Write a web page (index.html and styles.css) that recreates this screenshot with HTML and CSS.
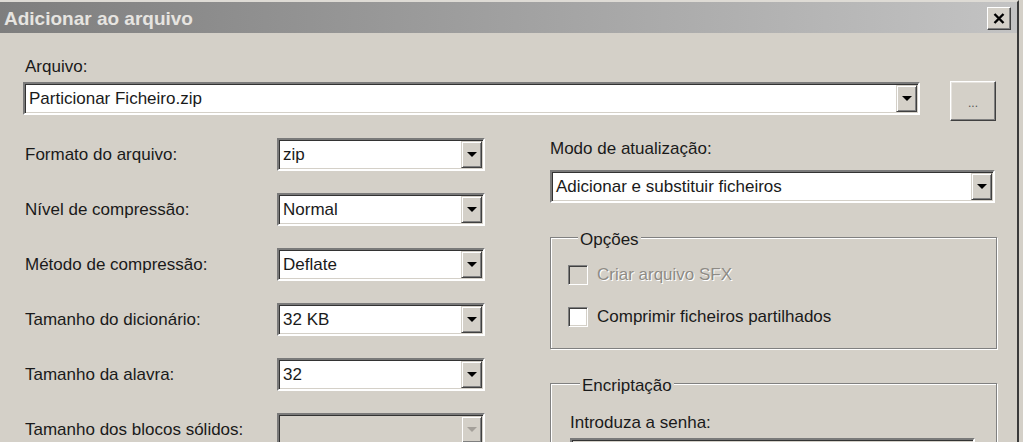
FILE: index.html
```html
<!DOCTYPE html>
<html lang="pt">
<head>
<meta charset="utf-8">
<title>Adicionar ao arquivo</title>
<link rel="stylesheet" href="styles.css">
</head>
<body>
<div class="window">
  <div class="titlebar">
    <span class="title">Adicionar ao arquivo</span>
    <span class="close">
      <svg width="12" height="11" viewBox="0 0 12 11"><path d="M1.5 1 L10.5 10 M10.5 1 L1.5 10" stroke="#000" stroke-width="2.4" fill="none"/></svg>
    </span>
  </div>
  <div class="content">
    <div class="label arq-label">Arquivo:</div>
    <div class="arq-row">
      <div class="combo combo-arq"><span class="value">Particionar Ficheiro.zip</span><span class="ddbtn"><i class="arrow"></i></span></div>
      <div class="button browse">...</div>
    </div>
    <div class="columns">
      <div class="col-left">
        <div class="field"><span class="label">Formato do arquivo:</span><div class="combo"><span class="value">zip</span><span class="ddbtn"><i class="arrow"></i></span></div></div>
        <div class="field"><span class="label">Nível de compressão:</span><div class="combo"><span class="value">Normal</span><span class="ddbtn"><i class="arrow"></i></span></div></div>
        <div class="field"><span class="label">Método de compressão:</span><div class="combo"><span class="value">Deflate</span><span class="ddbtn"><i class="arrow"></i></span></div></div>
        <div class="field"><span class="label">Tamanho do dicionário:</span><div class="combo"><span class="value">32 KB</span><span class="ddbtn"><i class="arrow"></i></span></div></div>
        <div class="field"><span class="label">Tamanho da alavra:</span><div class="combo"><span class="value">32</span><span class="ddbtn"><i class="arrow"></i></span></div></div>
        <div class="field"><span class="label">Tamanho dos blocos sólidos:</span><div class="combo disabled"><span class="value"></span><span class="ddbtn"><i class="arrow"></i></span></div></div>
      </div>
      <div class="col-right">
        <div class="label">Modo de atualização:</div>
        <div class="combo combo-mode"><span class="value">Adicionar e substituir ficheiros</span><span class="ddbtn"><i class="arrow"></i></span></div>
        <fieldset class="group">
          <legend>Opções</legend>
          <div class="checks">
            <div class="check disabled"><span class="box"></span><span class="check-text">Criar arquivo SFX</span></div>
            <div class="check"><span class="box"></span><span class="check-text">Comprimir ficheiros partilhados</span></div>
          </div>
        </fieldset>
        <fieldset class="group enc">
          <legend>Encriptação</legend>
          <div class="label">Introduza a senha:</div>
          <div class="input"></div>
        </fieldset>
      </div>
    </div>
  </div>
</div>
</body>
</html>
```

FILE: styles.css
```css
html, body {
  margin: 0;
  height: 442px;
  overflow: hidden;
}

body {
  background: #d4d0c8;
  font-family: "Liberation Sans", Arial, sans-serif;
  font-size: 17px;
  color: #1a1a1a;
}

.window {
  width: 1017px;
  height: 440px;
  border-top: 2px solid #dedbd5;
  border-right: 2px solid #3a3a3a;
  background: #d4d0c8;
}

.titlebar {
  height: 31px;
  box-sizing: border-box;
  background: linear-gradient(to right, #7e7e7e, #c3c3c3);
  display: flex;
  align-items: center;
  justify-content: space-between;
  padding: 2px 6px 0 4px;
}

.title {
  color: #e6e4e0;
  font-weight: bold;
  font-size: 19px;
  line-height: 22px;
}

.close {
  width: 24px;
  height: 23px;
  box-sizing: border-box;
  background: #d4d0c8;
  border: 1px solid;
  border-color: #ffffff #404040 #404040 #ffffff;
  box-shadow: inset -1px -1px #808080;
  display: flex;
  align-items: center;
  justify-content: center;
}

.content {
  padding-left: 23px;
}

.label {
  line-height: 20px;
}

.arq-label {
  padding-top: 24px;
  padding-left: 2px;
}

.arq-row {
  display: flex;
  align-items: flex-start;
  margin-top: 5px;
}

.combo {
  height: 33px;
  box-sizing: border-box;
  border: 2px solid;
  border-color: #7a7a7a #ffffff #ffffff #7a7a7a;
  box-shadow: inset 1px 1px #333333, inset -1px -1px #d4d0c8;
  background: #ffffff;
  display: flex;
  align-items: stretch;
}

.combo .value {
  flex: 1;
  padding-left: 4px;
  display: flex;
  align-items: center;
  white-space: nowrap;
}

.ddbtn {
  width: 21px;
  margin: 1px 1px 1px 0;
  box-sizing: border-box;
  background: #d4d0c8;
  border: 1px solid;
  border-color: #d4d0c8 #404040 #404040 #d4d0c8;
  box-shadow: inset 1px 1px #ffffff, inset -1px -1px #808080;
  display: flex;
  align-items: center;
  justify-content: center;
}

.arrow {
  width: 0;
  height: 0;
  border-left: 5px solid transparent;
  border-right: 5px solid transparent;
  border-top: 5px solid #000000;
}

.combo.disabled {
  background: #d4d0c8;
}

.combo.disabled .arrow {
  border-top-color: #a4a09a;
}

.combo-arq {
  width: 897px;
}

.button {
  box-sizing: border-box;
  background: #d4d0c8;
  border: 1px solid;
  border-color: #ffffff #404040 #404040 #ffffff;
  box-shadow: inset -1px -1px #808080, inset 1px 1px #e6e3de;
  display: flex;
  align-items: center;
  justify-content: center;
}

.browse {
  width: 46px;
  height: 40px;
  margin-left: 30px;
  margin-top: -1px;
  font-size: 12px;
  color: #555555;
  padding-top: 4px;
}

.columns {
  display: flex;
  gap: 65px;
}

.col-left {
  width: 462px;
  padding-top: 17px;
  display: flex;
  flex-direction: column;
  gap: 22px;
}

.field {
  display: flex;
  align-items: center;
  height: 33px;
}

.field .label {
  width: 252px;
  padding-left: 2px;
  white-space: nowrap;
}

.field .combo {
  width: 208px;
}

.col-right {
  width: 447px;
  padding-top: 18px;
}

.combo-mode {
  margin-top: 11px;
  width: 445px;
}

.group {
  margin: 21px 0 0;
  padding: 0 0 21px 17px;
  width: 447px;
  box-sizing: border-box;
  border: 1px solid #808080;
  box-shadow: inset 1px 1px #ffffff, 1px 1px #ffffff;
  min-width: 0;
}

.group legend {
  margin-left: 10px;
  padding: 6px 2px 0;
  line-height: 20px;
  background: #d4d0c8;
}

.checks {
  padding-top: 15px;
  display: flex;
  flex-direction: column;
  gap: 22px;
}

.check {
  display: flex;
  align-items: center;
  height: 20px;
}

.box {
  width: 20px;
  height: 20px;
  box-sizing: border-box;
  border: 1px solid;
  border-color: #808080 #ffffff #ffffff #808080;
  box-shadow: inset 1px 1px #404040, inset -1px -1px #d4d0c8;
  background: #ffffff;
}

.check-text {
  margin-left: 9px;
  line-height: 20px;
  white-space: nowrap;
}

.check.disabled .box {
  background: #d4d0c8;
}

.check.disabled .check-text {
  color: #8e8b85;
  text-shadow: 1px 1px #ffffff;
}

.enc {
  padding-left: 19px;
}

.enc .label {
  padding-top: 17px;
}

.input {
  margin-top: 5px;
  width: 405px;
  height: 33px;
  box-sizing: border-box;
  border: 2px solid;
  border-color: #7a7a7a #ffffff #ffffff #7a7a7a;
  box-shadow: inset 1px 1px #333333;
  background: #d4d0c8;
}
```
